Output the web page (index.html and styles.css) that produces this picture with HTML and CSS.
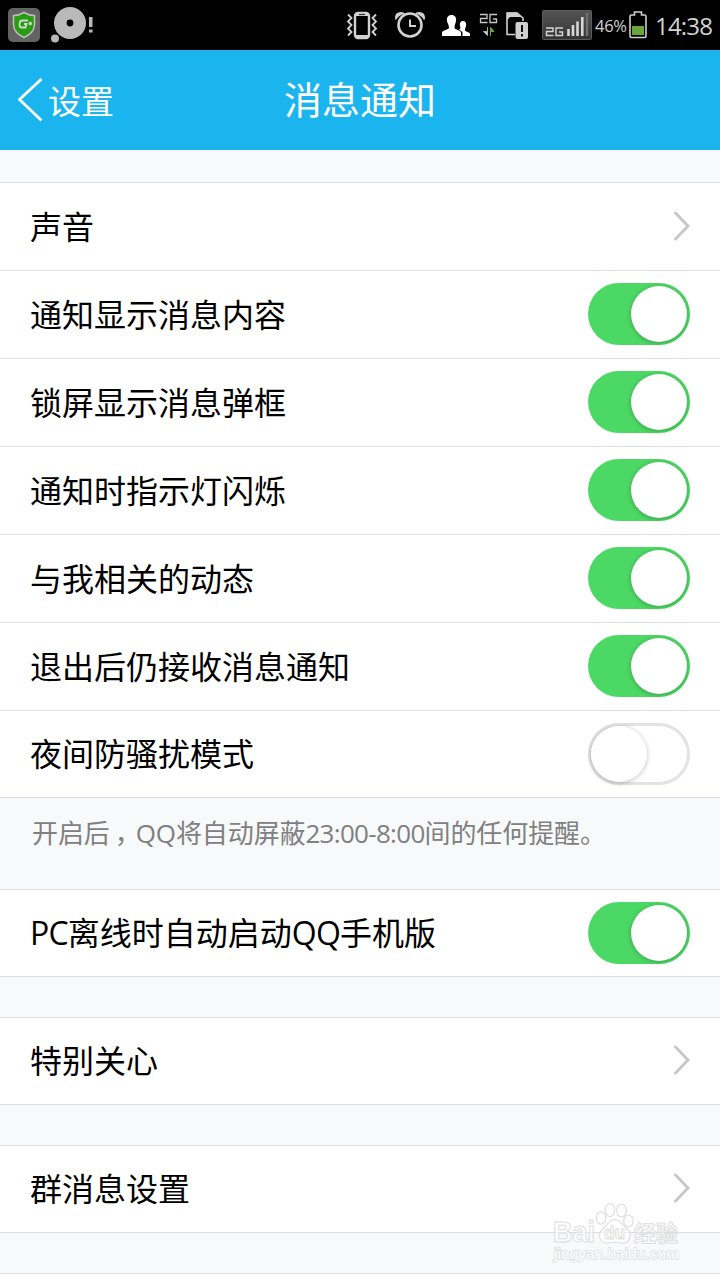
FILE: index.html
```
<!DOCTYPE html>
<html lang="zh-CN">

<head>
    <meta charset="UTF-8">
    <meta name="viewport" content="width=device-width, initial-scale=1.0">
    <title>消息通知</title>
    <link rel="stylesheet" href="styles.css">
</head>

<body>
    <div class="statusbar">
        <svg class="status-icons" width="540" height="50" viewBox="0 0 540 50">
            <!-- security shield -->
            <rect x="8" y="8" width="32" height="34" rx="5" fill="#636363"/>
            <path d="M24 12.500Q29 15.500 34.500 15.500V25Q34 33 24 37.500Q14 33 13.500 25V15.500Q19 15.500 24 12.500Z" fill="#2b9a16" stroke="#b8beb6" stroke-width="1.600"/>
            <path d="M28 20.500H22.500Q20 20.500 19.700 23L19.500 25Q19.500 27.500 21.500 27.500H25.500L26.500 24H24M28.500 23.500H32M30.300 21.700V25.300" fill="none" stroke="#c9ddc4" stroke-width="1.800"/>
            <!-- disc -->
            <circle cx="70" cy="23" r="16" fill="#b9b9b9"/>
            <circle cx="70" cy="23" r="3.400" fill="#000"/>
            <circle cx="55" cy="38.500" r="4" fill="#b9b9b9"/>
            <path d="M89 17H92.500V27H89ZM89 29.500H92.500V32.500H89Z" fill="#b9b9b9"/>
            <!-- vibrate -->
            <rect x="355" y="13" width="14" height="25" rx="3" fill="none" stroke="#d2d2d2" stroke-width="2.400"/>
            <path d="M355 13H369V16H355ZM355 35H369V38H355Z" fill="#d2d2d2"/>
            <path d="M359 14.500H365" stroke="#333" stroke-width="1.200"/>
            <path d="M348 14.500L351.500 18L348 21.500L351.500 25L348 28.500L351.500 32L348 35.500M376 14.500L372.500 18L376 21.500L372.500 25L376 28.500L372.500 32L376 35.500" fill="none" stroke="#d2d2d2" stroke-width="1.800"/>
            <!-- alarm -->
            <circle cx="410" cy="25" r="11.500" fill="none" stroke="#d2d2d2" stroke-width="2.600"/>
            <path d="M410 19.500V26H416" fill="none" stroke="#d2d2d2" stroke-width="2"/>
            <path d="M395 19Q394.500 12 401 12Q404 12 405 13.500Q398.500 15 396 20ZM425 19Q425.500 12 419 12Q416 12 415 13.500Q421.500 15 424 20Z" fill="#d2d2d2"/>
            <!-- contacts -->
            <path d="M451.500 15C455 15 456.500 17.500 456 21C455.700 23.500 454.500 25 454.500 28C456 30 461 30 461 33V36H442V33C442 30 447.500 30 449 28C449 25 447.500 23.500 447 21C446.500 17.500 448 15 451.500 15Z" fill="#fff"/>
            <path d="M463 21C466 21 466.500 24 466 26C465.500 28 465 28 465 30.500C466 32 470 32 470 34V36H462.500V33C462.500 31 459 30 459 29.500C461 29 460.500 28 460 26C459.500 24 460 21 463 21Z" fill="#fff"/>
            <!-- mobile data -->
            <path d="M480 14.500H487V18.500H480.500V22.500H487.500M497 14.500H490V22.500H496.500V19H493" fill="none" stroke="#c8c8c8" stroke-width="1.300"/>
            <path d="M487.500 27V35.500L483.500 31.500H487" fill="#c8c8c8" stroke="#c8c8c8" stroke-width=".8"/>
            <path d="M490.500 36V27.500L494 31.500H491" fill="#63a832" stroke="#63a832"/>
            <!-- sim warning -->
            <path d="M515 34.500H507V13H517L523 18V21" fill="none" stroke="#d0d0d0" stroke-width="1.600"/>
            <path d="M507 12.500H517L522 17H510L507 20Z" fill="#d0d0d0"/>
            <rect x="515.500" y="22" width="12.500" height="17" rx="2" fill="#d0d0d0"/>
            <path d="M522 25V32M522 34V36.500" stroke="#111" stroke-width="2"/>
        </svg>
        <svg class="signal" width="50" height="30" viewBox="0 0 50 30">
            <defs>
                <linearGradient id="signalBg" x1="0" y1="0" x2="0" y2="1">
                    <stop offset="0" stop-color="#555"/>
                    <stop offset="1" stop-color="#333"/>
                </linearGradient>
            </defs>
            <rect x=".5" y=".5" width="49" height="29" rx="1" fill="url(#signalBg)" stroke="#5c5c5c"/>
            <path d="M4 18H11V21.500H4.500V25.500H11.500M21 18H14V25.500H20.500V22H17" fill="none" stroke="#d6d6d6" stroke-width="1.400"/>
            <path d="M26.500 26V19M31 26V15M35.500 26V11.500M40.300 26V7" stroke="#d6d6d6" stroke-width="2.600"/>
            <path d="M45 26V3" stroke="#707070" stroke-width="2.400"/>
        </svg>
        <span class="percent">46%</span>
        <svg class="battery" width="18" height="28" viewBox="0 0 18 28">
            <path d="M2.500 4H5.500V1H12.500V4H15.500Q17 4 17 5.500V25Q17 26.500 15.500 26.500H2.500Q1 26.500 1 25V5.500Q1 4 2.500 4Z" fill="none" stroke="#cfcfcf" stroke-width="1.600"/>
            <rect x="3" y="15" width="12" height="9" fill="#68a63a"/>
        </svg>
        <span class="clock">14:38</span>
    </div>

    <header class="navbar">
        <a class="back">
            <svg width="26" height="44" viewBox="0 0 26 44">
                <path d="M23.500 1L1.500 21.500L23.500 42.500" fill="none" stroke="#fff" stroke-width="2.800"/>
            </svg>
            <span>设置</span>
        </a>
        <h1 class="title">消息通知</h1>
    </header>

    <main class="settings">
        <ul class="group">
            <li class="row"><span class="label">声音</span><svg class="arrow" width="18" height="30" viewBox="0 0 18 30"><path d="M3.500 2L16 15L3.500 28"/></svg></li>
            <li class="row"><span class="label">通知显示消息内容</span><i class="switch on"></i></li>
            <li class="row"><span class="label">锁屏显示消息弹框</span><i class="switch on"></i></li>
            <li class="row"><span class="label">通知时指示灯闪烁</span><i class="switch on"></i></li>
            <li class="row"><span class="label">与我相关的动态</span><i class="switch on"></i></li>
            <li class="row"><span class="label">退出后仍接收消息通知</span><i class="switch on"></i></li>
            <li class="row"><span class="label">夜间防骚扰模式</span><i class="switch"></i></li>
        </ul>
        <p class="hint">开启后<span class="comma">，</span>QQ将自动屏蔽<span class="time">23:00-8:00</span>间的任何提醒。</p>
        <ul class="group">
            <li class="row"><span class="label"><span class="latin">PC</span>离线时自动启动<span class="latin">QQ</span>手机版</span><i class="switch on"></i></li>
        </ul>
        <ul class="group">
            <li class="row"><span class="label">特别关心</span><svg class="arrow" width="18" height="30" viewBox="0 0 18 30"><path d="M3.500 2L16 15L3.500 28"/></svg></li>
        </ul>
        <ul class="group">
            <li class="row"><span class="label">群消息设置</span><svg class="arrow" width="18" height="30" viewBox="0 0 18 30"><path d="M3.500 2L16 15L3.500 28"/></svg></li>
        </ul>
        <div class="group next"></div>
    </main>

    <svg class="watermark" width="140" height="66" viewBox="0 0 140 66">
        <ellipse cx="50" cy="18" rx="4.800" ry="6.200"/>
        <ellipse cx="59" cy="10" rx="4.800" ry="6.500"/>
        <ellipse cx="70.500" cy="10.500" rx="4.800" ry="6.500"/>
        <ellipse cx="77.500" cy="21" rx="4.800" ry="6"/>
        <path d="M64 19.500C70 19.500 72 26 76 29C81 33 80 42 72.500 43C68.500 43.500 67 42 64 42C61 42 59 43.500 55 43C47.500 42 47 33 51 30C55 26 58 19.500 64 19.500Z"/>
        <text class="wm-logo" x="2" y="42" textLength="42" lengthAdjust="spacingAndGlyphs">Bai</text>
        <text class="wm-du" x="53" y="39" textLength="21" lengthAdjust="spacingAndGlyphs">du</text>
        <text class="wm-cn" x="83" y="41" textLength="44">经验</text>
        <text class="wm-url" x="3" y="59" textLength="125" lengthAdjust="spacingAndGlyphs">jingyan.baidu.com</text>
    </svg>
</body>

</html>
```

FILE: styles.css
```
* {
    box-sizing: border-box;
}

body {
    margin: 0;
    height: 1280px;
    overflow: hidden;
    position: relative;
    background-color: #f7f9fb;
    color: #000;
    font-family: "Open Sans", "Noto Sans CJK SC", sans-serif;
}

.statusbar {
    display: flex;
    align-items: center;
    height: 50px;
    background-color: #000;
    color: #d2d2d2;
}

.status-icons {
    flex: none;
}

.signal {
    flex: none;
    margin-left: 2px;
}

.percent {
    width: 37px;
    padding-left: 3px;
    font-size: 16.5px;
    letter-spacing: -0.3px;
}

.battery {
    flex: none;
}

.clock {
    margin-left: 8px;
    font-size: 24px;
    letter-spacing: -0.8px;
}

.navbar {
    display: grid;
    grid-template-columns: 1fr auto 1fr;
    align-items: center;
    height: 100px;
    background-color: #1ab4ee;
    color: #fff;
}

.back {
    display: flex;
    align-items: center;
    gap: 4px;
    padding-left: 18px;
    font-size: 33px;
}

.back span {
    padding-bottom: 1px;
}

.title {
    margin: 0;
    padding-bottom: 6px;
    font-size: 38px;
    font-weight: 400;
}

.settings {
    height: 1130px;
    padding-top: 32px;
    overflow: hidden;
}

.group {
    margin: 0 0 40px;
    padding: 0;
    list-style: none;
    border-top: 1px solid #dbdde0;
    background-color: #fff;
}

.group.next {
    height: 7px;
    margin-bottom: 0;
}

.row {
    display: flex;
    align-items: center;
    justify-content: space-between;
    height: 88px;
    padding: 0 30px 2px;
    border-bottom: 1px solid #dbdde0;
    font-size: 32px;
}

.row:last-child {
    height: 87px;
    padding-bottom: 0;
}

.label {
    padding-bottom: 1px;
}

.row:last-child .label {
    padding-bottom: 4px;
}

.latin {
    letter-spacing: -0.8px;
}

.arrow {
    fill: none;
    stroke: #c7c7c7;
    stroke-width: 3;
    stroke-linecap: round;
}

.group + .group .arrow {
    margin-bottom: 2px;
}

.switch {
    display: flex;
    width: 102px;
    height: 62px;
    padding: 3px;
    border-radius: 31px;
    box-shadow: inset 0 0 0 3px #e3e3e3;
}

.switch::before {
    content: "";
    width: 56px;
    height: 56px;
    border-radius: 50%;
    background-color: #fff;
    box-shadow: 0 1px 5px rgba(0, 0, 0, 0.25);
}

.switch.on {
    justify-content: flex-end;
    background-color: #4cd864;
    box-shadow: none;
}

.group:has(+ .hint) {
    margin-bottom: 0;
}

.hint {
    height: 91px;
    margin: 0;
    padding: 17px 32px 0;
    color: #808080;
    font-size: 26px;
    line-height: 36px;
    letter-spacing: -0.1px;
    white-space: nowrap;
}

.comma {
    display: inline-block;
    width: 26px;
    text-indent: 5px;
}

.time {
    letter-spacing: -0.7px;
}

.watermark {
    position: absolute;
    left: 551px;
    top: 1200px;
    fill: rgba(255, 255, 255, 0.6);
    stroke: #dedede;
    stroke-width: 1.2;
}

.watermark text {
    font-family: "Liberation Sans", "Noto Sans CJK SC", sans-serif;
    font-weight: 700;
    stroke-width: 1;
}

.watermark .wm-logo {
    font-size: 29px;
}

.watermark .wm-du {
    font-size: 18px;
}

.watermark .wm-cn {
    font-size: 22px;
}

.watermark .wm-url {
    font-size: 15px;
    font-weight: 400;
    fill: #fff;
    stroke-width: 1.4;
    paint-order: stroke;
}
```
